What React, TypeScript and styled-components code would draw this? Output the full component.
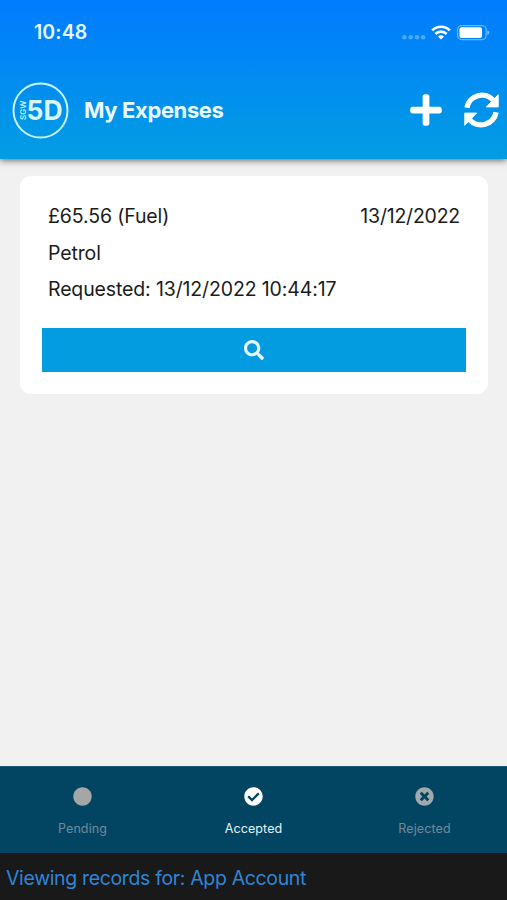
import React from "react";
import styled, { createGlobalStyle } from "styled-components";
import { FaPlus, FaSearch, FaCircle, FaCheckCircle, FaTimesCircle } from "react-icons/fa";

const GlobalStyle = createGlobalStyle`
  * { box-sizing: border-box; }
  body { margin: 0; font-family: Inter, "Liberation Sans", sans-serif; }
`;

const Screen = styled.div`
  width: 507px;
  height: 900px;
  display: flex;
  flex-direction: column;
  overflow: hidden;
  background: #f1f1f1;
`;

const Header = styled.header`
  height: 159px;
  flex: none;
  color: #fff;
  background: linear-gradient(#007bff, #029de2);
  box-shadow: 0 1px 7px rgba(0, 0, 0, 0.65);
`;

const StatusBar = styled.div`
  height: 62px;
  padding: 1px 17px 0 34px;
  display: flex;
  align-items: center;
  justify-content: space-between;
`;

const Clock = styled.span`
  font-size: 19.5px;
  font-weight: 600;
  letter-spacing: 0.1px;
  color: #e4f6ff;
`;

const StatusIcons = styled.svg`
  width: 88px;
  height: 18px;
  display: block;
`;

const TitleBar = styled.div`
  height: 96px;
  padding: 0 7px 0 12px;
  display: flex;
  align-items: center;
`;

const Logo = styled.svg`
  width: 57px;
  height: 57px;
  flex: none;
  margin-right: 15px;
`;

const Title = styled.h1`
  margin: 0;
  flex: 1;
  font-size: 22px;
  font-weight: 700;
  line-height: 30px;
  letter-spacing: -0.38px;
  color: #e8faff;
`;

const Actions = styled.div`
  display: flex;
  align-items: center;
  gap: 19px;
`;

const IconButton = styled.button`
  border: 0;
  padding: 0;
  background: none;
  color: #fff;
  display: flex;
  font-size: 36px;
`;

const RefreshIcon = styled.svg`
  width: 37px;
  height: 38px;
  display: block;
`;

const Content = styled.main`
  flex: 1;
  padding: 17px 19px 0 20px;
`;

const Card = styled.article`
  height: 218px;
  padding: 22px;
  border-radius: 11px;
  background: #fff;
`;

const Line = styled.div`
  height: 36.5px;
  padding: 0 6px;
  display: flex;
  align-items: center;
  justify-content: space-between;
  font-size: 19.5px;
  letter-spacing: -0.13px;
  color: #1b1b1b;
`;

const DateText = styled.span`
  letter-spacing: -0.22px;
`;

const ViewButton = styled.button`
  width: 100%;
  height: 44px;
  margin-top: 20px;
  border: 0;
  display: flex;
  align-items: center;
  justify-content: center;
  background: #039ce1;
  color: #e8faff;
  font-size: 20px;
`;

const Tabs = styled.nav`
  height: 87px;
  flex: none;
  display: grid;
  grid-template-columns: 165px 1fr 165px;
  border-top: 1px solid #1b5878;
  background: #024562;
`;

const Tab = styled.div<{ $color: string; $label: string }>`
  display: flex;
  flex-direction: column;
  align-items: center;
  padding-top: 20px;
  color: ${(p) => p.$color};
  svg { font-size: 19px; }
  span {
    margin-top: 14px;
    font-size: 12.5px;
    line-height: 17px;
    letter-spacing: 0.1px;
    color: ${(p) => p.$label};
  }
`;

const Footer = styled.footer`
  height: 47px;
  flex: none;
  padding: 0 6px;
  line-height: 50px;
  font-size: 19.5px;
  letter-spacing: -0.35px;
  color: #2f86d6;
  background: #191919;
`;

export default function App() {
  return (
    <>
      <GlobalStyle />
      <Screen>
        <Header>
          <StatusBar>
            <Clock>10:48</Clock>
            <StatusIcons viewBox="402 22 88 18" fill="none">
              <g fill="#fff" fillOpacity="0.3">
                <circle cx="404.5" cy="36.3" r="2.3" />
                <circle cx="410.7" cy="36.3" r="2.3" />
                <circle cx="417" cy="36.3" r="2.3" />
                <circle cx="423.2" cy="36.3" r="2.3" />
              </g>
              <g stroke="#fff" strokeWidth="2.7">
                <path d="M432.2 29.4a12.4 12.4 0 0 1 17.6 0" />
                <path d="M435.4 33a7.9 7.9 0 0 1 11.2 0" />
              </g>
              <path d="M441 38.6l-3-3a4.3 4.3 0 0 1 6 0z" fill="#fff" />
              <rect x="457.6" y="24.6" width="28.6" height="14" rx="4" stroke="#fff" strokeOpacity="0.42" strokeWidth="1.2" />
              <rect x="459.5" y="26.3" width="22.5" height="10.6" rx="2" fill="#fff" />
              <path d="M487.4 29.3c2.6 1 2.6 3.6 0 4.6z" fill="#fff" fillOpacity="0.5" />
            </StatusIcons>
          </StatusBar>
          <TitleBar>
            <Logo viewBox="0 0 57 57">
              <circle cx="28.5" cy="28.5" r="27" fill="none" stroke="#c9f3ff" strokeWidth="2" />
              <text x="14.5" y="37.5" fontFamily="Inter, sans-serif" fontSize="26.5" fontWeight="650" fill="#d9f7ff" textLength="36" lengthAdjust="spacingAndGlyphs">5D</text>
              <text transform="translate(14 38) rotate(-90)" fontFamily="Inter, sans-serif" fontSize="8" fontWeight="600" fill="#c0efff" textLength="19.5">SGW</text>
            </Logo>
            <Title>My Expenses</Title>
            <Actions>
              <IconButton aria-label="Add"><FaPlus /></IconButton>
              <IconButton aria-label="Refresh">
                <RefreshIcon viewBox="0 0 37 38">
                  <g fill="none" stroke="#fff" strokeWidth="5.4">
                    <path d="M3.9 16.8A15.3 15.3 0 0 1 30.6 9.6" />
                    <path d="M33.1 21.2A15.3 15.3 0 0 1 6.4 28.4" />
                  </g>
                  <g fill="#fff" stroke="#fff" strokeWidth="0.8" strokeLinejoin="round">
                    <path d="M35.3 3.6V16H23.2z" />
                    <path d="M1.7 34.4V22H13.8z" />
                  </g>
                </RefreshIcon>
              </IconButton>
            </Actions>
          </TitleBar>
        </Header>
        <Content>
          <Card>
            <Line><span>£65.56 (Fuel)</span><DateText>13/12/2022</DateText></Line>
            <Line>Petrol</Line>
            <Line>Requested: 13/12/2022 10:44:17</Line>
            <ViewButton aria-label="View"><FaSearch /></ViewButton>
          </Card>
        </Content>
        <Tabs>
          <Tab $color="#a5a6a6" $label="#72899a"><FaCircle /><span>Pending</span></Tab>
          <Tab $color="#fff" $label="#e3f3fa"><FaCheckCircle /><span>Accepted</span></Tab>
          <Tab $color="#a0a9ae" $label="#72899a"><FaTimesCircle /><span>Rejected</span></Tab>
        </Tabs>
        <Footer>Viewing records for: App Account</Footer>
      </Screen>
    </>
  );
}
